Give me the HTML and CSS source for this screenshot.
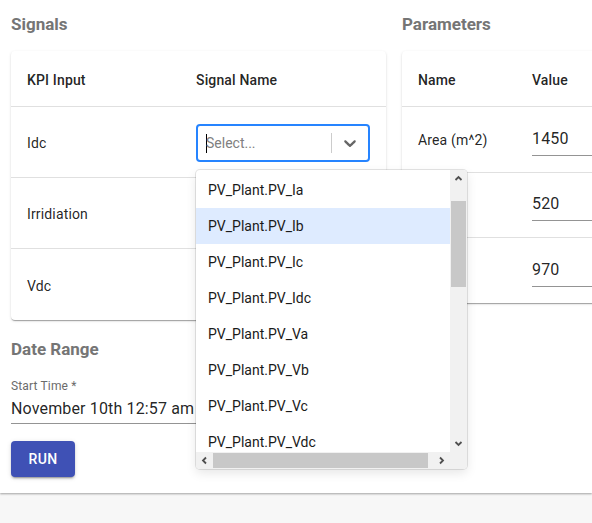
FILE: index.html
```html
<!DOCTYPE html>
<html>
<head>
<meta charset="utf-8">
<link rel="stylesheet" href="styles.css">
</head>
<body>
<div class="page">
  <div class="columns">
    <section class="col signals">
      <h2 class="title">Signals</h2>
      <div class="card">
        <div class="row head">
          <div class="cell c1">KPI Input</div>
          <div class="cell c2">Signal Name</div>
        </div>
        <div class="row sig">
          <div class="cell c1">Idc</div>
          <div class="cell c2 ctl">
            <div class="select-wrap">
              <div class="select">
                <div class="value"><span class="caret"></span><span class="ph">Select...</span></div>
                <span class="sep"></span>
                <span class="ind">
                  <svg width="20" height="20" viewBox="0 0 20 20"><path fill="#666" d="M4.516 7.548c0.436-0.446 1.043-0.481 1.576 0l3.908 3.747 3.908-3.747c0.533-0.481 1.141-0.446 1.574 0 0.436 0.445 0.408 1.197 0 1.615-0.406 0.418-4.695 4.502-4.695 4.502-0.217 0.223-0.502 0.335-0.787 0.335s-0.57-0.112-0.789-0.335c0 0-4.287-4.084-4.695-4.502s-0.436-1.170 0-1.615z"/></svg>
                </span>
              </div>
              <div class="menu">
                <div class="list">
                  <div class="opt">PV_Plant.PV_Ia</div>
                  <div class="opt active">PV_Plant.PV_Ib</div>
                  <div class="opt">PV_Plant.PV_Ic</div>
                  <div class="opt">PV_Plant.PV_Idc</div>
                  <div class="opt">PV_Plant.PV_Va</div>
                  <div class="opt">PV_Plant.PV_Vb</div>
                  <div class="opt">PV_Plant.PV_Vc</div>
                  <div class="opt">PV_Plant.PV_Vdc</div>
                </div>
                <div class="vbar">
                  <svg class="arr" width="17" height="17" viewBox="0 0 17 17"><path d="M5.5 10 L8.5 7 L11.5 10" fill="none" stroke="#505050" stroke-width="1.8"/></svg>
                  <div class="vthumb"></div>
                  <div class="vspace"></div>
                  <svg class="arr" width="17" height="17" viewBox="0 0 17 17"><path d="M5.5 7 L8.5 10 L11.5 7" fill="none" stroke="#505050" stroke-width="1.8"/></svg>
                </div>
                <div class="hbar">
                  <svg class="arr" width="17" height="17" viewBox="0 0 17 17"><path d="M10 5.5 L7 8.5 L10 11.5" fill="none" stroke="#505050" stroke-width="1.8"/></svg>
                  <div class="hthumb"></div>
                  <svg class="arr" width="17" height="17" viewBox="0 0 17 17"><path d="M7 5.5 L10 8.5 L7 11.5" fill="none" stroke="#505050" stroke-width="1.8"/></svg>
                </div>
                <div class="corner"></div>
              </div>
            </div>
          </div>
        </div>
        <div class="row sig">
          <div class="cell c1">Irridiation</div>
          <div class="cell c2"></div>
        </div>
        <div class="row sig last">
          <div class="cell c1">Vdc</div>
          <div class="cell c2"></div>
        </div>
      </div>

      <h2 class="title date-title">Date Range</h2>
      <div class="field">
        <label class="flabel">Start Time *</label>
        <div class="finput">November 10th 12:57 am</div>
      </div>
      <button class="run">RUN</button>
    </section>

    <section class="col params">
      <h2 class="title">Parameters</h2>
      <div class="card">
        <div class="row head">
          <div class="cell p1">Name</div>
          <div class="cell p2">Value</div>
        </div>
        <div class="row par">
          <div class="cell p1">Area (m^2)</div>
          <div class="cell p2 ctl"><div class="pin">1450</div></div>
        </div>
        <div class="row par">
          <div class="cell p1"></div>
          <div class="cell p2 ctl"><div class="pin">520</div></div>
        </div>
        <div class="row par last">
          <div class="cell p1"></div>
          <div class="cell p2 ctl"><div class="pin">970</div></div>
        </div>
      </div>
    </section>
  </div>
</div>
</body>
</html>
```

FILE: styles.css
```css
* { box-sizing: border-box; }
html, body { margin: 0; padding: 0; }
body {
  background: #f7f7f7;
  font-family: Roboto, "Liberation Sans", sans-serif;
  color: rgba(0,0,0,0.87);
  letter-spacing: 0.15px;
  width: 592px;
  height: 523px;
  overflow: hidden;
}
.page {
  background: #fff;
  padding: 0 0 16px 11px;
  box-shadow: 0 1px 2px rgba(0,0,0,0.35);
  width: 592px;
  overflow: hidden;
}
.columns {
  display: flex;
  gap: 16px;
  align-items: flex-start;
}
.col.signals { width: 375px; flex: none; }
.col.params { width: 300px; flex: none; }
.title {
  margin: 0;
  padding-top: 14px;
  font-size: 17px;
  line-height: 20px;
  font-weight: 700;
  color: #757575;
  letter-spacing: 0;
  height: 34px;
  margin-bottom: 17px;
}
.card {
  background: #fff;
  border-radius: 4px;
  box-shadow: 0 2px 1px -1px rgba(0,0,0,0.2), 0 1px 1px 0 rgba(0,0,0,0.14), 0 1px 3px 0 rgba(0,0,0,0.12);
}
.row {
  display: flex;
  align-items: center;
  border-bottom: 1px solid #e0e0e0;
}
.row.last { border-bottom: none; }
.row.head { height: 56px; font-weight: 500; font-size: 14px; }
.row.sig { height: 71px; font-size: 14px; }
.row.par { height: 65.5px; font-size: 14px; }
.row.last.par { height: 64.5px; }
.cell { padding-left: 16px; padding-top: 2px; flex: none; }
.cell.ctl { padding-top: 0; }
.c1 { width: 169px; }
.c2 { width: 206px; }
.p1 { width: 114px; }
.p2 { width: 186px; }

.select-wrap { position: relative; width: 174px; margin-top: 2px; }
.select {
  height: 38px;
  border: 2px solid #2684ff;
  border-radius: 4px;
  display: flex;
  align-items: center;
}
.value {
  flex: 1;
  display: flex;
  align-items: center;
  padding-left: 8px;
  font-size: 14px;
  color: #808080;
  letter-spacing: 0;
}
.caret {
  width: 1px;
  height: 19px;
  background: #000;
  margin-right: -1px;
}
.sep {
  width: 1px;
  height: 20px;
  background: #ccc;
}
.ind {
  width: 36px;
  display: flex;
  justify-content: center;
  align-items: center;
  height: 34px;
}
.ind svg { display: block; }

.menu {
  position: absolute;
  left: 0;
  top: 46px;
  width: 271px;
  height: 299px;
  background: #fff;
  border-radius: 4px;
  box-shadow: 0 0 0 1px rgba(0,0,0,0.1), 0 4px 11px rgba(0,0,0,0.1);
  display: grid;
  grid-template-columns: 254px 17px;
  grid-template-rows: 282px 17px;
  overflow: hidden;
  z-index: 5;
}
.list {
  padding-top: 2px;
  overflow: hidden;
}
.opt {
  height: 36px;
  padding: 8px 12px;
  line-height: 20px;
  font-size: 14px;
  color: #1a1a1a;
  letter-spacing: 0;
  white-space: nowrap;
}
.opt.active { background: #deebff; }
.vbar {
  background: #f1f1f1;
  display: flex;
  flex-direction: column;
  align-items: center;
}
.arr { display: block; flex: none; }
.vthumb {
  width: 15px;
  height: 86px;
  margin-top: 14px;
  background: #c8c8c8;
}
.vspace { flex: 1; }
.hbar {
  background: #f1f1f1;
  display: flex;
  align-items: center;
}
.hthumb {
  height: 15px;
  width: 215px;
  background: #c8c8c8;
}
.hbar .arr:last-child { margin-left: 5px; }
.corner { background: #f1f1f1; }

.date-title { padding-top: 0; margin-top: 19px; height: 20px; margin-bottom: 0; }
.field { margin-top: 21px; width: 200px; }
.flabel {
  display: block;
  font-size: 12px;
  line-height: 12px;
  color: #6b6b6b;
}
.finput {
  padding-top: 7px;
  padding-bottom: 5px;
  font-size: 16px;
  line-height: 19px;
  border-bottom: 1px solid rgba(0,0,0,0.42);
  white-space: nowrap;
}
.run {
  display: block;
  margin-top: 17px;
  width: 64px;
  height: 36px;
  border: none;
  border-radius: 4px;
  background: #3f51b5;
  color: #fff;
  font-family: Roboto, "Liberation Sans", sans-serif;
  font-weight: 500;
  font-size: 14px;
  letter-spacing: 0.4px;
  box-shadow: 0 3px 1px -2px rgba(0,0,0,0.2), 0 2px 2px 0 rgba(0,0,0,0.14), 0 1px 5px 0 rgba(0,0,0,0.12);
}

.pin {
  width: 150px;
  font-size: 16px;
  line-height: 19px;
  padding: 6px 0 7px;
  border-bottom: 1px solid rgba(0,0,0,0.42);
}
```
